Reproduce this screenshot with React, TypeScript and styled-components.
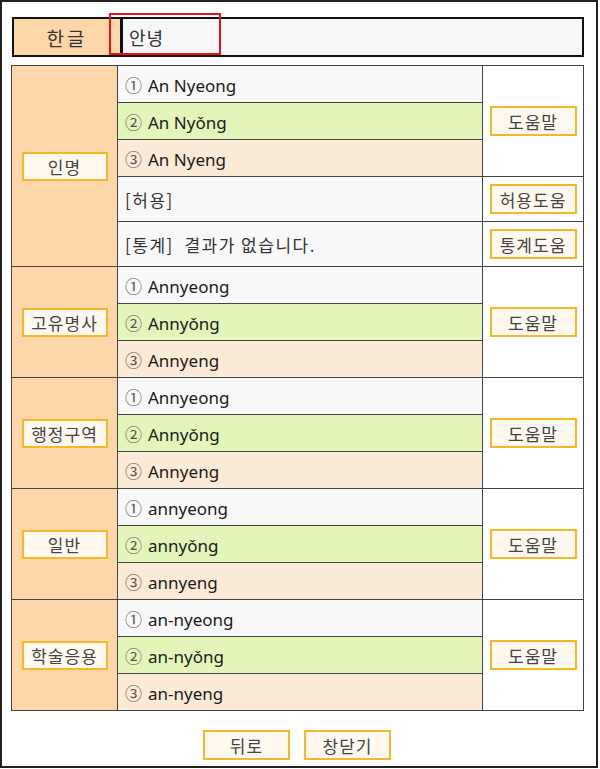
import React from 'react';
import styled, { createGlobalStyle } from 'styled-components';

type Tone = 'plain' | 'green' | 'peach';
type Variant = { mark: string; text: string; tone: Tone };

type Group = {
  label: string;
  variants: Variant[];
  extra?: { text: string; help: string }[];
};

const tones: Tone[] = ['plain', 'green', 'peach'];

const makeVariants = (a: string, b: string, c: string): Variant[] =>
  [a, b, c].map((text, i) => ({ mark: ['①', '②', '③'][i], text, tone: tones[i] }));

const groups: Group[] = [
  {
    label: '인명',
    variants: makeVariants('An Nyeong', 'An Nyǒng', 'An Nyeng'),
    extra: [
      { text: '[허용]', help: '허용도움' },
      { text: '[통계]  결과가 없습니다.', help: '통계도움' },
    ],
  },
  { label: '고유명사', variants: makeVariants('Annyeong', 'Annyǒng', 'Annyeng') },
  { label: '행정구역', variants: makeVariants('Annyeong', 'Annyǒng', 'Annyeng') },
  { label: '일반', variants: makeVariants('annyeong', 'annyǒng', 'annyeng') },
  { label: '학술응용', variants: makeVariants('an-nyeong', 'an-nyǒng', 'an-nyeng') },
];

export default function App() {
  return (
    <>
      <GlobalStyle />
      <Frame>
        <Header>
          <HeaderLabel>한글</HeaderLabel>
          <HeaderValue>안녕</HeaderValue>
          <Highlight />
        </Header>
        <Table>
          <colgroup>
            <col style={{ width: 106 }} />
            <col style={{ width: 365 }} />
            <col style={{ width: 101 }} />
          </colgroup>
          <tbody>
            {groups.map((g) => {
              const rowCount = g.variants.length + (g.extra ? g.extra.length : 0);
              return (
                <React.Fragment key={g.label}>
                  {g.variants.map((v, i) => (
                    <tr key={v.text}>
                      {i === 0 && (
                        <LabelCell rowSpan={rowCount}>
                          <LabelButton>{g.label}</LabelButton>
                        </LabelCell>
                      )}
                      <ValueCell tone={v.tone}>
                        <Mark>{v.mark}</Mark>
                        {v.text}
                      </ValueCell>
                      {i === 0 && (
                        <HelpCell rowSpan={g.variants.length}>
                          <HelpButton>도움말</HelpButton>
                        </HelpCell>
                      )}
                    </tr>
                  ))}
                  {g.extra?.map((e) => (
                    <tr key={e.help}>
                      <ValueCell tone="plain" tall>
                        <Hangul>{e.text}</Hangul>
                      </ValueCell>
                      <HelpCell>
                        <HelpButton>{e.help}</HelpButton>
                      </HelpCell>
                    </tr>
                  ))}
                </React.Fragment>
              );
            })}
          </tbody>
        </Table>
        <Footer>
          <HelpButton>뒤로</HelpButton>
          <HelpButton>창닫기</HelpButton>
        </Footer>
      </Frame>
    </>
  );
}

const GlobalStyle = createGlobalStyle`
  html, body {
    margin: 0;
    padding: 0;
    background: #ffffff;
  }
  body {
    font-family: 'Noto Sans', 'Noto Sans CJK KR', sans-serif;
    color: #222222;
  }
`;

const Frame = styled.div`
  box-sizing: border-box;
  width: 598px;
  height: 768px;
  border: 2px solid #222222;
  padding: 15px 0 0 9px;
`;

const Header = styled.div`
  position: relative;
  box-sizing: border-box;
  display: flex;
  width: 572px;
  height: 40px;
  margin-left: 1px;
  border: 2px solid #111111;
  background: #f6f6f6;
`;

const HeaderLabel = styled.div`
  width: 106px;
  border-right: 3px solid #111111;
  background: #fdd7aa;
  display: flex;
  align-items: center;
  justify-content: center;
  font-family: 'Noto Sans CJK KR', sans-serif;
  font-size: 19px;
  letter-spacing: 3px;
  color: #333333;
`;

const HeaderValue = styled.div`
  display: flex;
  align-items: center;
  padding-left: 6px;
  font-family: 'Noto Sans CJK KR', sans-serif;
  font-size: 18px;
  letter-spacing: 1px;
  color: #333333;
`;

const Highlight = styled.div`
  position: absolute;
  left: 95px;
  top: -6px;
  width: 112px;
  height: 42px;
  box-sizing: border-box;
  border: 2px solid #e8141b;
`;

const Table = styled.table`
  margin-top: 8px;
  width: 572px;
  border-collapse: collapse;
  table-layout: fixed;
  border: 1px solid #444444;

  td {
    border: 1px solid #444444;
    padding: 0;
  }
`;

const LabelCell = styled.td`
  background: #fdd7aa;
  text-align: center;
  vertical-align: middle;
`;

const toneColors: Record<Tone, string> = {
  plain: '#f8f8f8',
  green: '#e2f6b9',
  peach: '#fbead6',
};

const ValueCell = styled.td<{ tone: Tone; tall?: boolean }>`
  height: ${({ tall }) => (tall ? '44px' : '36px')};
  background: ${({ tone }) => toneColors[tone]};
  padding-left: 7px !important;
  font-size: 17px;
  color: #1a1a1a;
  white-space: pre;
`;

const Mark = styled.span`
  margin-right: 6px;
  color: #555555;
  font-family: 'Noto Sans CJK KR', sans-serif;
`;

const Hangul = styled.span`
  font-family: 'Noto Sans CJK KR', sans-serif;
  letter-spacing: 1.5px;
  color: #333333;
`;

const HelpCell = styled.td`
  background: #ffffff;
  text-align: center;
  vertical-align: middle;
`;

const buttonBase = `
  box-sizing: border-box;
  display: inline-flex;
  align-items: center;
  justify-content: center;
  border: 2px solid #f6b826;
  background: #fff8ee;
  font-family: 'Noto Sans CJK KR', 'Noto Sans', sans-serif;
  font-size: 17px;
  letter-spacing: 1px;
  color: #444444;
  padding: 0;
`;

const LabelButton = styled.button`
  ${buttonBase}
  width: 86px;
  height: 29px;
`;

const HelpButton = styled.button`
  ${buttonBase}
  width: 87px;
  height: 30px;
`;

const Footer = styled.div`
  display: flex;
  justify-content: center;
  gap: 14px;
  width: 572px;
  margin-top: 19px;
`;
